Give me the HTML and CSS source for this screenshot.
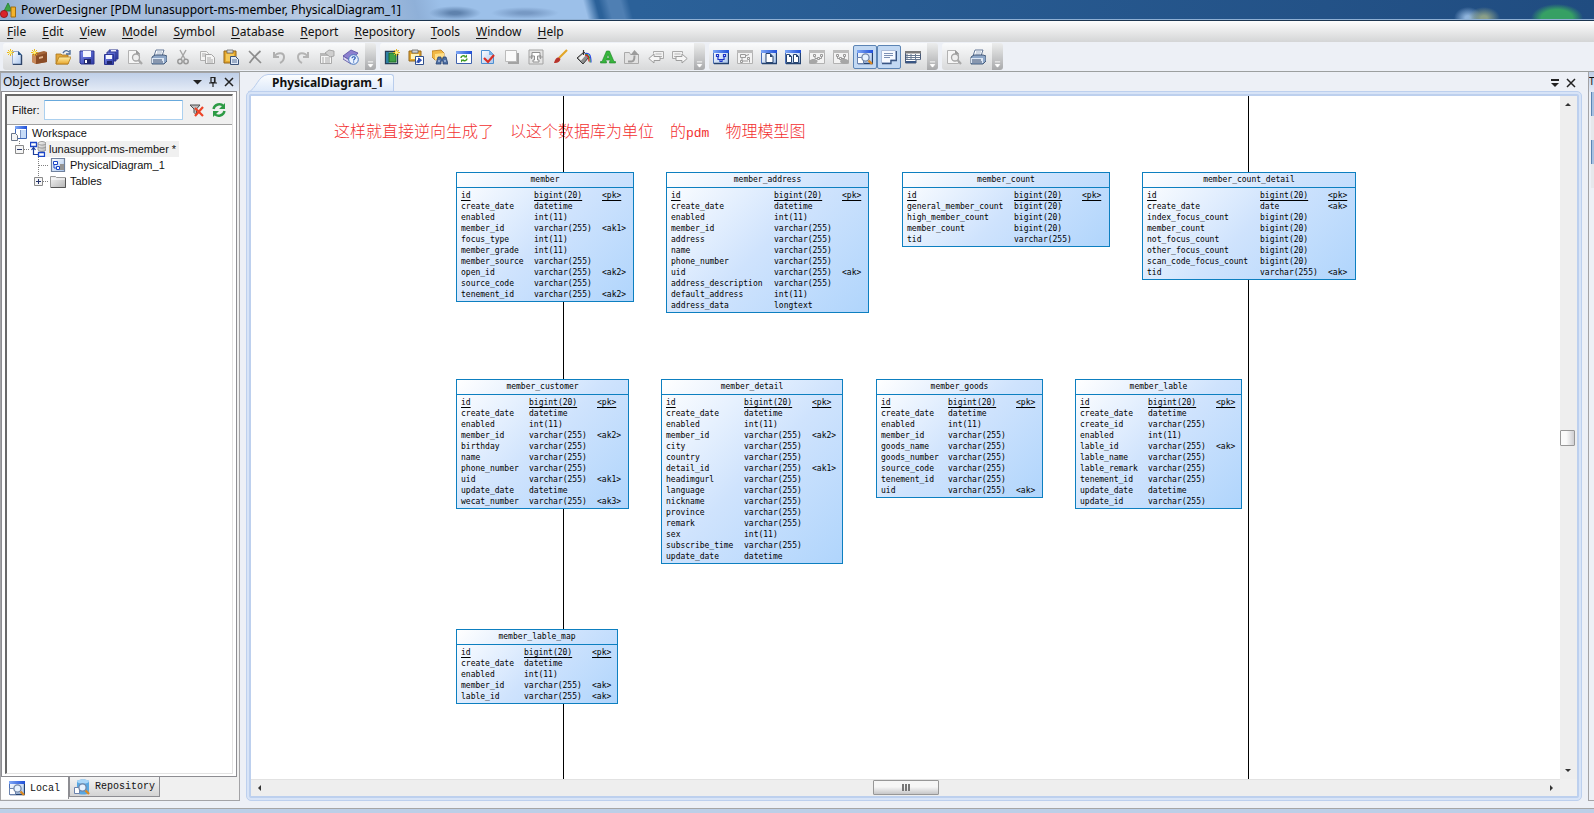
FILE: index.html
```html
<!DOCTYPE html>
<html lang="en">
<head>
<meta charset="utf-8">
<title>PowerDesigner [PDM lunasupport-ms-member, PhysicalDiagram_1]</title>
<link rel="stylesheet" href="styles.css">
</head>
<body>
<svg class="defs" width="0" height="0" aria-hidden="true">
  <defs>
    <linearGradient id="g-blue" x1="0" y1="0" x2="1" y2="1"><stop offset="0" stop-color="#ffffff"/><stop offset="1" stop-color="#a9c6ee"/></linearGradient>
    <linearGradient id="g-navy" x1="0" y1="0" x2="1" y2="1"><stop offset="0" stop-color="#7d8cf0"/><stop offset="1" stop-color="#2b37a0"/></linearGradient>
    <linearGradient id="g-gold" x1="0" y1="0" x2="0" y2="1"><stop offset="0" stop-color="#fff0a8"/><stop offset="1" stop-color="#e8a62c"/></linearGradient>
    <linearGradient id="g-gray" x1="0" y1="0" x2="1" y2="1"><stop offset="0" stop-color="#f6f6f6"/><stop offset="1" stop-color="#b4b4b4"/></linearGradient>
    <linearGradient id="g-win" x1="0" y1="0" x2="1" y2="0"><stop offset="0" stop-color="#7fa8f5"/><stop offset="1" stop-color="#1f4fd8"/></linearGradient>
    <linearGradient id="g-tab" x1="0" y1="0" x2="0" y2="1"><stop offset="0" stop-color="#fbfdff"/><stop offset="1" stop-color="#dce8f9"/></linearGradient>
    <symbol id="spark" viewBox="0 0 16 16"><path d="M3.500 0v7M0 3.500h7M1 1l5 5M6 1l-5 5" stroke="#e8b820" stroke-width="1"/><circle cx="3.500" cy="3.500" r="1.500" fill="#fff27a"/></symbol>
    <symbol id="page-new" viewBox="0 0 16 16"><path d="M5.500 2.500h6l3 3v10h-9z" fill="url(#g-blue)" stroke="#9aaccc"/><path d="M14.500 6v9.500H6" fill="none" stroke="#2d4468" stroke-width="1.400"/><path d="M11 2v4h4z" fill="#2d5a88"/><use href="#spark"/></symbol>
    <symbol id="case-new" viewBox="0 0 16 16"><path d="M1 5l12-3 3 1v10l-11 2-4-2z" fill="#a5663a"/><path d="M5 7l11-3v9L5 15z" fill="#8a4c26"/><path d="M1 5l4 2v8l-4-2z" fill="#c98b5c"/><path d="M8 8l4-1v2l-4 1z" fill="#e3b48c"/><use href="#spark"/></symbol>
    <symbol id="open" viewBox="0 0 16 16"><path d="M1 5h5l1 1h6v9H1z" fill="#e3a83c" stroke="#a87418" stroke-width=".8"/><path d="M1 15l3-7h12l-3 7z" fill="url(#g-gold)" stroke="#b17c1e" stroke-width=".8"/><path d="M8 4c2-3 4-3 6-1M15 1v4h-4" fill="none" stroke="#4d6d98" stroke-width="1.400"/></symbol>
    <symbol id="save" viewBox="0 0 16 16"><path d="M1 2h14v13H2l-1-1z" fill="url(#g-navy)" stroke="#2c3590"/><path d="M4 2h8v6H4z" fill="#f4f6ff"/><path d="M5 10h7v5H5z" fill="#20276c"/><path d="M6 11h2v3H6z" fill="#fff"/></symbol>
    <symbol id="save-all" viewBox="0 0 16 16"><path d="M6 1h9v9H6z" fill="url(#g-navy)" stroke="#2c3590"/><path d="M8 1h5v3H8z" fill="#eef"/><path d="M4 3h9v9H4z" fill="url(#g-navy)" stroke="#2c3590"/><path d="M1.500 5.500h9v10h-9z" fill="url(#g-navy)" stroke="#2c3590"/><path d="M3 6h6v4H3z" fill="#f4f6ff"/><path d="M4 12h5v3H4z" fill="#20276c"/></symbol>
    <symbol id="preview" viewBox="0 0 16 16"><path d="M1.500 1.500h8l3 3v10h-11z" fill="#f6f6f6" stroke="#b2b2b2"/><path d="M9 1v4h4z" fill="#999"/><circle cx="9" cy="8.500" r="3.500" fill="#eee" fill-opacity=".9" stroke="#a4a4a4" stroke-width="1.300"/><path d="M11.500 11l3.500 4" stroke="#a8a8a8" stroke-width="2.200"/></symbol>
    <symbol id="print" viewBox="0 0 16 16"><path d="M5 1h8l-2 6H3z" fill="#fff" stroke="#536a8c" stroke-width=".9"/><path d="M6 3h5M5.500 5h5" stroke="#8ba0bd" stroke-width=".8"/><path d="M1 8l3-2h9l3 1v5l-3 3H1z" fill="#8ea7c8" stroke="#3c5272" stroke-width=".9"/><path d="M1 9h12v5H1z" fill="#dde7f4"/><path d="M2 11h9M2 13h10" stroke="#35496a" stroke-width="1"/></symbol>
    <symbol id="cut" viewBox="0 0 16 16"><path d="M5 1l5 9M11 1l-5 9" stroke="#a5a5a5" stroke-width="1.400"/><circle cx="5" cy="12.500" r="2.200" fill="none" stroke="#999" stroke-width="1.500"/><circle cx="11" cy="12.500" r="2.200" fill="none" stroke="#999" stroke-width="1.500"/></symbol>
    <symbol id="copy" viewBox="0 0 16 16"><path d="M1.500 2.500h6l2 2v7h-8z" fill="#f4f4f4" stroke="#b0b0b0"/><path d="M6.500 5.500h6l3 3v6h-9z" fill="#f4f4f4" stroke="#a4a4a4"/><path d="M3 5h4M3 7h3M8 9h4M8 11h6M8 13h6" stroke="#ababab"/></symbol>
    <symbol id="paste" viewBox="0 0 16 16"><path d="M1 2h12v12H1z" fill="#e4a72d" stroke="#94661a"/><path d="M4 1h6v3H4z" fill="#d5d5d5" stroke="#6a6a6a" stroke-width=".8"/><path d="M3 5h8v7H3z" fill="#f4c95a"/><path d="M7.500 7.500h5l3 3v5h-8z" fill="#dfe9f8" stroke="#3b5278"/><path d="M9 11h5M9 13h5" stroke="#5b7398"/></symbol>
    <symbol id="delete" viewBox="0 0 16 16"><path d="M2 2l12 12M13.500 2C9 6 6 9 2.500 14" fill="none" stroke="#8d8d8d" stroke-width="1.700"/></symbol>
    <symbol id="undo" viewBox="0 0 16 16"><path d="M3 3v5h5M3 8c3-5 10-5 10 0 0 3-2 5-4 6" fill="none" stroke="#b0b0b0" stroke-width="2"/></symbol>
    <symbol id="redo" viewBox="0 0 16 16"><path d="M13 3v5H8M13 8C10 3 3 3 3 8c0 3 2 5 4 6" fill="none" stroke="#b4b4b4" stroke-width="2"/></symbol>
    <symbol id="props" viewBox="0 0 16 16"><path d="M1.500 4.500h11v10h-11z" fill="#f5f5f5" stroke="#aaa"/><path d="M1 4h12v3H1z" fill="#b8b8b8"/><path d="M3 9h2M6 9h5M3 11h2M6 11h5M3 13h2M6 13h5" stroke="#aaa"/><path d="M6 4l4-3 5 1v5l-4 1z" fill="#cfcfcf" stroke="#999" stroke-width=".8"/></symbol>
    <symbol id="help" viewBox="0 0 16 16"><path d="M0 7l8-6 7 3-7 8z" fill="#8c80cf" stroke="#564da0" stroke-width=".8"/><path d="M0 7l8 5v3L0 10z" fill="#dcd8f2" stroke="#564da0" stroke-width=".8"/><circle cx="10.500" cy="10.500" r="4.800" fill="#e9f2ff" stroke="#4775bd"/><path d="M9 9.300c0-2 3.400-2 3.200-.2 0 1-1.600 1.100-1.600 2.300M10.600 12.500v1" fill="none" stroke="#2056b0" stroke-width="1.200"/></symbol>
    <symbol id="book-new" viewBox="0 0 16 16"><path d="M1.500 2.500h12v12h-12z" fill="#fff" stroke="#273d55" stroke-width="1.300"/><path d="M2 3h3v11H2z" fill="#2e7fa0"/><path d="M5 4h7v9H5z" fill="#3fa145" stroke="#1d6c2b"/><g transform="translate(9 0)"><path d="M3.500 0v7M0 3.500h7M1 1l5 5M6 1l-5 5" stroke="#e8b820"/><circle cx="3.500" cy="3.500" r="1.500" fill="#fff27a"/></g></symbol>
    <symbol id="paste-link" viewBox="0 0 16 16"><path d="M1 2h12v10H1z" fill="#e4a72d" stroke="#94661a"/><path d="M4 1h6v3H4z" fill="#cfcfcf" stroke="#666" stroke-width=".8"/><path d="M3 5h8v5H3z" fill="#fff2b8"/><path d="M7.500 7.500h8v8h-8z" fill="#fff" stroke="#30508c"/><path d="M9 14c0-3 1-3 3-3M10.500 9l3 2-3 3z" fill="#2b4eb5" stroke="#2b4eb5"/></symbol>
    <symbol id="find" viewBox="0 0 16 16"><path d="M0 2l9-1 3 3v5l-9 2-3-3z" fill="#f1b845" stroke="#b7791c" stroke-width=".8"/><path d="M3 5l9-1v5l-9 2z" fill="#ffdf88"/><path d="M6 8h3v2h2V8h3l2 7h-5v-3h-2v3H4z" fill="#4e6fa3" stroke="#2a4574" stroke-width=".8"/><path d="M6 12h2M12 12h2" stroke="#d6e6fb"/></symbol>
    <symbol id="win-refresh" viewBox="0 0 16 16"><path d="M.5 2.500h15v12H.5z" fill="#fff" stroke="#3f62ad"/><path d="M0 2h16v3H0z" fill="url(#g-win)"/><path d="M5 9c0-2 3-3 4-1.500M11 9.500c0 2-3 3-4 1.500" fill="none" stroke="#3e9a22" stroke-width="1.400"/><path d="M8 8.500h3V5.500zM8 10.500H5v3z" fill="#3e9a22"/></symbol>
    <symbol id="check" viewBox="0 0 16 16"><path d="M1.500 1.500h8l4 4v9h-12z" fill="url(#g-blue)" stroke="#4d8fd0"/><path d="M9 1v5h5z" fill="#76b1e5"/><path d="M4 9l4 4 6-7" fill="none" stroke="#d93025" stroke-width="2.200"/></symbol>
    <symbol id="shadow" viewBox="0 0 16 16"><path d="M4 4h11v11H4z" fill="#a3a3a3"/><path d="M1.500 1.500h11v11h-11z" fill="#fafafa" stroke="#bbb"/></symbol>
    <symbol id="text-frame" viewBox="0 0 16 16"><path d="M1 1h14v14H1z" fill="#e4e4e4" stroke="#a3a3a3"/><path d="M4 3.500h8v3.500H9.500v4H11v2H5v-2h1.500V7H4z" fill="#fff" stroke="#8f8f8f"/><path d="M1 8h4M11 8h4M3.500 6v4M12.500 6v4" stroke="#999" stroke-width="1.200"/></symbol>
    <symbol id="brush" viewBox="0 0 16 16"><path d="M15 1L7 9" stroke="#e2a526" stroke-width="2.200"/><path d="M7 8.500c-3 0-4 2-5 5.500 3 .5 6-1 6.500-4z" fill="#b8332b"/></symbol>
    <symbol id="bucket" viewBox="0 0 16 16"><path d="M1 9l7-6 5 5-6 7z" fill="#8d8d8d" stroke="#3b3b3b"/><path d="M2.500 9L8 4l2 2-5 5.500z" fill="#f1f1f1"/><path d="M7.500 6V1" stroke="#333" stroke-width="1.200"/><path d="M9 4.500c4-1 6 1 6 9" fill="none" stroke="#2848e8" stroke-width="1.200"/><path d="M9 5.500c3-1 5 1 5 8" fill="none" stroke="#28a628" stroke-width="1"/><path d="M9 6.500c2-1 4 1 4 6" fill="none" stroke="#e02020" stroke-width="1.200"/></symbol>
    <symbol id="font" viewBox="0 0 16 16"><path fill-rule="evenodd" d="M6.500 2h3L14 12.500h1.500V14H9.500v-1.500h1L10 11H6l-.5 1.500h1V14H.5v-1.500H2zM8 5.500L6.600 9h2.800z" fill="#37b63c" stroke="#1d8427" stroke-width=".6"/></symbol>
    <symbol id="folder-up" viewBox="0 0 16 16"><path d="M.5 3.500h5l1 2h8v9H.5z" fill="#e2e2e2" stroke="#aaa"/><path d="M4 12.500h3.500c2 0 3-1 3-6" fill="none" stroke="#9c9c9c" stroke-width="2"/><path d="M6.500 6l4-5 4.500 5z" fill="#9c9c9c"/></symbol>
    <symbol id="back" viewBox="0 0 16 16"><path d="M5.500 4.500V2.500h10v7h-4" fill="#f2f2f2" stroke="#a9a9a9"/><path d="M7.500 5h6M12 7.500h2" stroke="#b5b5b5"/><path d="M.8 9.500L6 5v2.500h6v4H6V14z" fill="#f6f6f6" stroke="#9d9d9d"/></symbol>
    <symbol id="forward" viewBox="0 0 16 16"><path d="M10.500 4.500V2.500H.5v7h4" fill="#f2f2f2" stroke="#a9a9a9"/><path d="M2.500 5h6M2 7.500h2" stroke="#b5b5b5"/><path d="M15.200 9.500L10 5v2.500H4v4h6V14z" fill="#f6f6f6" stroke="#9d9d9d"/></symbol>
    <symbol id="win" viewBox="0 0 16 16"><path d="M.5 1.500h15v13H.5z" fill="url(#g-blue)" stroke="#4a6fb8"/><path d="M0 1h16v3H0z" fill="url(#g-win)"/><path d="M15.500 4v10.500H1" fill="none" stroke="#24426f" stroke-width="1.300"/></symbol>
    <symbol id="win-gray" viewBox="0 0 16 16"><path d="M.5 1.500h15v13H.5z" fill="#f3f3f3" stroke="#b2b2b2"/><path d="M0 1h16v3H0z" fill="#bcbcbc"/></symbol>
    <symbol id="win-model" viewBox="0 0 16 16"><use href="#win"/><path d="M3.500 5.500h2v2h-2zM10.500 5.500h2v2h-2zM7 10.500h2v2H7zM5 8v2.500h2M11 8v2.500H9.500" fill="#fff" stroke="#1c35c8" stroke-width="1.200"/></symbol>
    <symbol id="win-parts" viewBox="0 0 16 16"><use href="#win-gray"/><path d="M3.500 5.500h5v3h-5zM3.500 11.500h2v2h-2zM10.500 8.500h2v2h-2zM8 7l4-1.500M12.500 11v2.500M5 12h6M5 9v2" fill="none" stroke="#999"/></symbol>
    <symbol id="win-page" viewBox="0 0 16 16"><use href="#win"/><path d="M5 4.500h4l3 3v6H5z" fill="#fff" stroke="#28456e"/><path d="M9 4v4h3z" fill="#28456e"/></symbol>
    <symbol id="win-pages" viewBox="0 0 16 16"><use href="#win"/><path d="M1.500 5.500h3l2 2v6h-5zM8.500 5.500h3l2 2v6h-5z" fill="#fff" stroke="#28456e"/><path d="M4 5v3h3zM11 5v3h3z" fill="#28456e"/></symbol>
    <symbol id="win-left" viewBox="0 0 16 16"><use href="#win-gray"/><path d="M4.500 5.500h2v2h-2zM11.500 5.500h2v2h-2zM8.500 8.500h2v2h-2zM6 8v1.500h2M12.500 8v1.500H11" fill="none" stroke="#999"/><path d="M0 12c3-3 6-2 8-1 2 2-1 4-4 4s-5-1-4-3z" fill="#a6a6a6"/></symbol>
    <symbol id="win-right" viewBox="0 0 16 16"><use href="#win-gray"/><path d="M3.500 5.500h2v2h-2zM10.500 5.500h2v2h-2zM6.500 8.500h2v2h-2zM4.500 8v1.500h2M11.500 8v1.500H9" fill="none" stroke="#999"/><path d="M7 12c2-3 6-3 9 0 0 2-1 3-4 3s-5-1-5-3z" fill="#a6a6a6"/></symbol>
    <symbol id="win-find" viewBox="0 0 16 16"><use href="#win"/><path d="M.5 8.500h6v6h-6z" fill="#fff" stroke="#6b83ad"/><circle cx="8.500" cy="8.500" r="3.600" fill="#e6f2ff" stroke="#7286a6" stroke-width="1.300"/><path d="M11.500 11.500l3.500 3.500" stroke="#dc8b22" stroke-width="2.400"/></symbol>
    <symbol id="output" viewBox="0 0 16 16"><path d="M.5 1.500h14v9.500H9.500v3h-9z" fill="#f7faff" stroke="#aabbd8"/><path d="M15.500 2v9.500H10v3H1" fill="none" stroke="#3a5683" stroke-width="1.300"/><path d="M3 4.500h9M3 6.500h9M3 8.500h6" stroke="#7c90b4"/></symbol>
    <symbol id="grid" viewBox="0 0 16 16"><path d="M.5 2.500h15v8H11v3.500H.5z" fill="#fff" stroke="#495a78"/><path d="M0 2h16v2.500H0z" fill="#7a7a7a"/><path d="M2 5v6M6 5v6M10.500 5v6M1 6.500h14M1 8.500h14M1 10.500h14" stroke="#66788f"/><path d="M1 13h10" stroke="#3a5683" stroke-width="2"/></symbol>
    <symbol id="repo" viewBox="0 0 16 16"><path d="M3 2c2-2 10-2 12 0v12c-2 2-10 2-12 0z" fill="#58a7e2"/><ellipse cx="9" cy="2.500" rx="6" ry="2" fill="#a9d6f8"/><path d="M.5 8.500h5v6h-5z" fill="#fff" stroke="#6b83ad"/><circle cx="8.500" cy="8.500" r="3.600" fill="#e6f2ff" stroke="#7286a6" stroke-width="1.300"/><path d="M11.500 11.500l3.500 3.500" stroke="#dc8b22" stroke-width="2.400"/></symbol>
  </defs>
</svg>

<header class="titlebar">
  <svg class="app-icon" width="16" height="16" viewBox="0 0 16 16"><path d="M8 1l4 8H4z" fill="#3da447" stroke="#1f7a2d" stroke-width=".8"/><circle cx="4" cy="12" r="3.600" fill="#d9252b" stroke="#8d1418" stroke-width=".8"/><path d="M11 5h4.500v10H11z" fill="#f3b32b" stroke="#a06c10"/></svg>
  <h1>PowerDesigner [PDM lunasupport-ms-member, PhysicalDiagram_1]</h1>
</header>

<nav class="menubar" aria-label="Menu">
  <button><u>F</u>ile</button><button><u>E</u>dit</button><button><u>V</u>iew</button><button><u>M</u>odel</button><button><u>S</u>ymbol</button><button><u>D</u>atabase</button><button><u>R</u>eport</button><button><u>R</u>epository</button><button><u>T</u>ools</button><button><u>W</u>indow</button><button><u>H</u>elp</button>
</nav>

<div class="toolbars">
  <div class="toolbar" role="toolbar" aria-label="Standard">
    <div class="tools">
      <button aria-label="New model"><svg><use href="#page-new"/></svg></button>
      <button aria-label="New project"><svg><use href="#case-new"/></svg></button>
      <button aria-label="Open"><svg><use href="#open"/></svg></button>
      <button aria-label="Save"><svg><use href="#save"/></svg></button>
      <button aria-label="Save all"><svg><use href="#save-all"/></svg></button>
      <button aria-label="Print preview"><svg><use href="#preview"/></svg></button>
      <button aria-label="Print"><svg><use href="#print"/></svg></button>
      <button aria-label="Cut"><svg><use href="#cut"/></svg></button>
      <button aria-label="Copy"><svg><use href="#copy"/></svg></button>
      <button aria-label="Paste"><svg><use href="#paste"/></svg></button>
      <button aria-label="Delete"><svg><use href="#delete"/></svg></button>
      <button aria-label="Undo"><svg><use href="#undo"/></svg></button>
      <button aria-label="Redo"><svg><use href="#redo"/></svg></button>
      <button aria-label="Properties"><svg><use href="#props"/></svg></button>
      <button aria-label="Help"><svg><use href="#help"/></svg></button>
    </div>
    <button class="more" aria-label="Toolbar options"><svg viewBox="0 0 8 8"><path d="M1 1h6M1.500 4h5L4 7z" fill="#fff" stroke="#fff"/></svg></button>
  </div>
  <div class="toolbar" role="toolbar" aria-label="Diagram">
    <div class="tools">
      <button aria-label="New diagram"><svg><use href="#book-new"/></svg></button>
      <button aria-label="Paste as shortcut"><svg><use href="#paste-link"/></svg></button>
      <button aria-label="Find objects"><svg><use href="#find"/></svg></button>
      <button aria-label="Refresh"><svg><use href="#win-refresh"/></svg></button>
      <button aria-label="Check model"><svg><use href="#check"/></svg></button>
      <button aria-label="Shadow"><svg><use href="#shadow"/></svg></button>
      <button aria-label="Text frame"><svg><use href="#text-frame"/></svg></button>
      <button aria-label="Line style"><svg><use href="#brush"/></svg></button>
      <button aria-label="Fill"><svg><use href="#bucket"/></svg></button>
      <button aria-label="Font"><svg><use href="#font"/></svg></button>
      <button aria-label="Up one level"><svg><use href="#folder-up"/></svg></button>
      <button aria-label="Previous view"><svg><use href="#back"/></svg></button>
      <button aria-label="Next view"><svg><use href="#forward"/></svg></button>
    </div>
    <button class="more" aria-label="Toolbar options"><svg viewBox="0 0 8 8"><path d="M1 1h6M1.500 4h5L4 7z" fill="#fff" stroke="#fff"/></svg></button>
  </div>
  <div class="toolbar" role="toolbar" aria-label="View">
    <div class="tools">
      <button aria-label="Model view"><svg><use href="#win-model"/></svg></button>
      <button aria-label="Parts view"><svg><use href="#win-parts"/></svg></button>
      <button aria-label="Page view"><svg><use href="#win-page"/></svg></button>
      <button aria-label="Pages view"><svg><use href="#win-pages"/></svg></button>
      <button aria-label="Previous diagram"><svg><use href="#win-left"/></svg></button>
      <button aria-label="Next diagram"><svg><use href="#win-right"/></svg></button>
      <button class="on" aria-pressed="true" aria-label="Object browser"><svg><use href="#win-find"/></svg></button>
      <button class="on" aria-pressed="true" aria-label="Output"><svg><use href="#output"/></svg></button>
      <button aria-label="Result list"><svg><use href="#grid"/></svg></button>
    </div>
    <button class="more" aria-label="Toolbar options"><svg viewBox="0 0 8 8"><path d="M1 1h6M1.500 4h5L4 7z" fill="#fff" stroke="#fff"/></svg></button>
  </div>
  <div class="toolbar" role="toolbar" aria-label="Print">
    <div class="tools">
      <button aria-label="Preview"><svg><use href="#preview"/></svg></button>
      <button aria-label="Print diagram"><svg><use href="#print"/></svg></button>
    </div>
    <button class="more" aria-label="Toolbar options"><svg viewBox="0 0 8 8"><path d="M1 1h6M1.500 4h5L4 7z" fill="#fff" stroke="#fff"/></svg></button>
  </div>
</div>

<main class="workspace">
  <aside class="browser">
    <header class="panel-head">
      <h2>Object Browser</h2>
      <button aria-label="Menu"><svg viewBox="0 0 12 12"><path d="M2 4h9L6.500 8.500z" fill="#222"/></svg></button>
      <button aria-label="Pin"><svg viewBox="0 0 12 12"><path d="M4 1.500h4v5H4zM7.500 1.500v5M2 7h8M6 7v4" fill="none" stroke="#222" stroke-width="1.200"/></svg></button>
      <button aria-label="Close"><svg viewBox="0 0 12 12"><path d="M2 2l8 8M10 2l-8 8" stroke="#222" stroke-width="1.500"/></svg></button>
    </header>
    <div class="panel-body">
      <div class="panel-inset">
        <div class="filter">
          <label for="filter">Filter:</label>
          <input id="filter" type="text">
          <button aria-label="Clear filter"><svg viewBox="0 0 16 16"><path d="M1 3h10L7.500 7v6L5 10.500V7z" fill="#bdbdbd" stroke="#4e4e4e"/><path d="M6 6l8 8M14 5l-8 9" stroke="#ec4326" stroke-width="2.200"/></svg></button>
          <button aria-label="Refresh tree"><svg viewBox="0 0 16 16"><path d="M2.500 7c1-5 7-6 10-3M13.500 9c-1 5-7 6-10 3" fill="none" stroke="#2d9b45" stroke-width="2.400"/><path d="M14 1v6H8zM2 15V9h6z" fill="#2d9b45"/></svg></button>
        </div>
        <ul class="tree" role="tree">
          <li class="node root" role="treeitem"><svg class="ico" viewBox="0 0 16 16"><path d="M4.500 1.500h11v12h-11z" fill="#fff" stroke="#3f68b8"/><path d="M4 1h12v3H4z" fill="url(#g-win)"/><path d="M9.500 5v8" stroke="#7f97c5"/><path d="M10 5h5v8h-5z" fill="#c7dcf8"/><path d="M.5 8.500h4l2 2v5h-6z" fill="#f5f5f5" stroke="#6c7788"/></svg><span>Workspace</span></li>
          <li class="node model" role="treeitem"><svg class="twig" viewBox="0 0 15 16"><path d="M4.500 0v4M9 8.500h6" stroke="#808080" stroke-dasharray="1 1"/><path d="M.5 4.500h8v8h-8z" fill="#f5f5f5" stroke="#8a8a8a"/><path d="M2 8.500h5" stroke="#26356b"/></svg><svg class="ico" viewBox="0 0 16 16"><path d="M8 2c2-2 6-2 8 0v7c-2 2-6 2-8 0z" fill="url(#g-gray)" stroke="#888" stroke-width=".8"/><path d="M8 3c2 1.500 6 1.500 8 0M8 6c2 1.500 6 1.500 8 0" fill="none" stroke="#888" stroke-width=".8"/><path d="M.5 1.500h6v4h-6zM8.500 11.500h6v4h-6z" fill="#fff" stroke="#1b46c8" stroke-width="1.300"/><path d="M3.500 6v7.500H8M1.500 9l2-2.500L5.500 9" fill="none" stroke="#1d3f9c" stroke-width="1.200"/></svg><span class="selected">lunasupport-ms-member *</span></li>
          <li class="node leaf" role="treeitem"><svg class="twig" viewBox="0 0 15 16"><path d="M4.500 0v16M5 8.500h10" stroke="#808080" stroke-dasharray="1 1"/></svg><svg class="ico" viewBox="0 0 16 16"><path d="M1.500 1.500h13v13h-13z" fill="url(#g-blue)" stroke="#6f819d" stroke-width="1.200"/><path d="M3.500 4.500h4v3h-4zM6.500 9.500h3v3h-3zM4 8v3h2" fill="#fff" stroke="#1b46c8"/><path d="M10 7h4v6h-4z" fill="#949494"/></svg><span>PhysicalDiagram_1</span></li>
          <li class="node leaf" role="treeitem"><svg class="twig" viewBox="0 0 15 16"><path d="M4.500 0v4M9 8.500h6" stroke="#808080" stroke-dasharray="1 1"/><path d="M.5 4.500h8v8h-8z" fill="#f5f5f5" stroke="#8a8a8a"/><path d="M2 8.500h5M4.500 6v5" stroke="#26356b"/></svg><svg class="ico" viewBox="0 0 16 16"><path d="M.5 3.500h5l1 1h9v10H.5z" fill="url(#g-gray)" stroke="#9a9a9a"/><path d="M1 6h14" stroke="#fff"/><path d="M15.500 5v9.500H1" fill="none" stroke="#555"/></svg><span>Tables</span></li>
        </ul>
      </div>
    </div>
    <div class="browser-tabs" role="tablist">
      <button role="tab" aria-selected="true" class="active"><svg><use href="#win-find"/></svg>Local</button>
      <button role="tab" aria-selected="false"><svg><use href="#repo"/></svg>Repository</button>
    </div>
  </aside>

  <section class="document">
    <div class="doc-strip">
      <button class="doc-tab"><svg class="slope" viewBox="0 0 22 18"><path d="M0 18C8 16 10 1 20 .5h2V18z" fill="url(#g-tab)"/><path d="M0 18C8 16 10 1 20 .5h2" fill="none" stroke="#b9cdec"/></svg><span>PhysicalDiagram_1</span></button>
      <div class="doc-actions">
        <button aria-label="Window list"><svg viewBox="0 0 12 12"><path d="M2 3h8" stroke="#222" stroke-width="2"/><path d="M2 6h8L6 10z" fill="#222"/></svg></button>
        <button aria-label="Close diagram"><svg viewBox="0 0 12 12"><path d="M2 2l8 8M10 2l-8 8" stroke="#222" stroke-width="1.500"/></svg></button>
      </div>
    </div>
    <div class="frame">
      <div class="frame-inner">
        <div class="canvas">
          <p class="note">这样就直接逆向生成了　以这个数据库为单位　的<span>pdm</span>　物理模型图</p>
          <div class="page-line line-a"></div>
          <div class="page-line line-b"></div>

          <article class="entity row-1 c1"><h3>member</h3><table>
            <tr><td><u>id</u></td><td><u>bigint(20)</u></td><td><u>&lt;pk&gt;</u></td></tr>
            <tr><td>create_date</td><td>datetime</td><td></td></tr>
            <tr><td>enabled</td><td>int(11)</td><td></td></tr>
            <tr><td>member_id</td><td>varchar(255)</td><td>&lt;ak1&gt;</td></tr>
            <tr><td>focus_type</td><td>int(11)</td><td></td></tr>
            <tr><td>member_grade</td><td>int(11)</td><td></td></tr>
            <tr><td>member_source</td><td>varchar(255)</td><td></td></tr>
            <tr><td>open_id</td><td>varchar(255)</td><td>&lt;ak2&gt;</td></tr>
            <tr><td>source_code</td><td>varchar(255)</td><td></td></tr>
            <tr><td>tenement_id</td><td>varchar(255)</td><td>&lt;ak2&gt;</td></tr>
          </table></article>

          <article class="entity row-1 c2"><h3>member_address</h3><table>
            <tr><td><u>id</u></td><td><u>bigint(20)</u></td><td><u>&lt;pk&gt;</u></td></tr>
            <tr><td>create_date</td><td>datetime</td><td></td></tr>
            <tr><td>enabled</td><td>int(11)</td><td></td></tr>
            <tr><td>member_id</td><td>varchar(255)</td><td></td></tr>
            <tr><td>address</td><td>varchar(255)</td><td></td></tr>
            <tr><td>name</td><td>varchar(255)</td><td></td></tr>
            <tr><td>phone_number</td><td>varchar(255)</td><td></td></tr>
            <tr><td>uid</td><td>varchar(255)</td><td>&lt;ak&gt;</td></tr>
            <tr><td>address_description</td><td>varchar(255)</td><td></td></tr>
            <tr><td>default_address</td><td>int(11)</td><td></td></tr>
            <tr><td>address_data</td><td>longtext</td><td></td></tr>
          </table></article>

          <article class="entity row-1 c3"><h3>member_count</h3><table>
            <tr><td><u>id</u></td><td><u>bigint(20)</u></td><td><u>&lt;pk&gt;</u></td></tr>
            <tr><td>general_member_count</td><td>bigint(20)</td><td></td></tr>
            <tr><td>high_member_count</td><td>bigint(20)</td><td></td></tr>
            <tr><td>member_count</td><td>bigint(20)</td><td></td></tr>
            <tr><td>tid</td><td>varchar(255)</td><td></td></tr>
          </table></article>

          <article class="entity row-1 c4"><h3>member_count_detail</h3><table>
            <tr><td><u>id</u></td><td><u>bigint(20)</u></td><td><u>&lt;pk&gt;</u></td></tr>
            <tr><td>create_date</td><td>date</td><td>&lt;ak&gt;</td></tr>
            <tr><td>index_focus_count</td><td>bigint(20)</td><td></td></tr>
            <tr><td>member_count</td><td>bigint(20)</td><td></td></tr>
            <tr><td>not_focus_count</td><td>bigint(20)</td><td></td></tr>
            <tr><td>other_focus_count</td><td>bigint(20)</td><td></td></tr>
            <tr><td>scan_code_focus_count</td><td>bigint(20)</td><td></td></tr>
            <tr><td>tid</td><td>varchar(255)</td><td>&lt;ak&gt;</td></tr>
          </table></article>

          <article class="entity row-2 c5"><h3>member_customer</h3><table>
            <tr><td><u>id</u></td><td><u>bigint(20)</u></td><td><u>&lt;pk&gt;</u></td></tr>
            <tr><td>create_date</td><td>datetime</td><td></td></tr>
            <tr><td>enabled</td><td>int(11)</td><td></td></tr>
            <tr><td>member_id</td><td>varchar(255)</td><td>&lt;ak2&gt;</td></tr>
            <tr><td>birthday</td><td>varchar(255)</td><td></td></tr>
            <tr><td>name</td><td>varchar(255)</td><td></td></tr>
            <tr><td>phone_number</td><td>varchar(255)</td><td></td></tr>
            <tr><td>uid</td><td>varchar(255)</td><td>&lt;ak1&gt;</td></tr>
            <tr><td>update_date</td><td>datetime</td><td></td></tr>
            <tr><td>wecat_number</td><td>varchar(255)</td><td>&lt;ak3&gt;</td></tr>
          </table></article>

          <article class="entity row-2 c6"><h3>member_detail</h3><table>
            <tr><td><u>id</u></td><td><u>bigint(20)</u></td><td><u>&lt;pk&gt;</u></td></tr>
            <tr><td>create_date</td><td>datetime</td><td></td></tr>
            <tr><td>enabled</td><td>int(11)</td><td></td></tr>
            <tr><td>member_id</td><td>varchar(255)</td><td>&lt;ak2&gt;</td></tr>
            <tr><td>city</td><td>varchar(255)</td><td></td></tr>
            <tr><td>country</td><td>varchar(255)</td><td></td></tr>
            <tr><td>detail_id</td><td>varchar(255)</td><td>&lt;ak1&gt;</td></tr>
            <tr><td>headimgurl</td><td>varchar(255)</td><td></td></tr>
            <tr><td>language</td><td>varchar(255)</td><td></td></tr>
            <tr><td>nickname</td><td>varchar(255)</td><td></td></tr>
            <tr><td>province</td><td>varchar(255)</td><td></td></tr>
            <tr><td>remark</td><td>varchar(255)</td><td></td></tr>
            <tr><td>sex</td><td>int(11)</td><td></td></tr>
            <tr><td>subscribe_time</td><td>varchar(255)</td><td></td></tr>
            <tr><td>update_date</td><td>datetime</td><td></td></tr>
          </table></article>

          <article class="entity row-2 c7"><h3>member_goods</h3><table>
            <tr><td><u>id</u></td><td><u>bigint(20)</u></td><td><u>&lt;pk&gt;</u></td></tr>
            <tr><td>create_date</td><td>datetime</td><td></td></tr>
            <tr><td>enabled</td><td>int(11)</td><td></td></tr>
            <tr><td>member_id</td><td>varchar(255)</td><td></td></tr>
            <tr><td>goods_name</td><td>varchar(255)</td><td></td></tr>
            <tr><td>goods_number</td><td>varchar(255)</td><td></td></tr>
            <tr><td>source_code</td><td>varchar(255)</td><td></td></tr>
            <tr><td>tenement_id</td><td>varchar(255)</td><td></td></tr>
            <tr><td>uid</td><td>varchar(255)</td><td>&lt;ak&gt;</td></tr>
          </table></article>

          <article class="entity row-2 c8"><h3>member_lable</h3><table>
            <tr><td><u>id</u></td><td><u>bigint(20)</u></td><td><u>&lt;pk&gt;</u></td></tr>
            <tr><td>create_date</td><td>datetime</td><td></td></tr>
            <tr><td>create_id</td><td>varchar(255)</td><td></td></tr>
            <tr><td>enabled</td><td>int(11)</td><td></td></tr>
            <tr><td>lable_id</td><td>varchar(255)</td><td>&lt;ak&gt;</td></tr>
            <tr><td>lable_name</td><td>varchar(255)</td><td></td></tr>
            <tr><td>lable_remark</td><td>varchar(255)</td><td></td></tr>
            <tr><td>tenement_id</td><td>varchar(255)</td><td></td></tr>
            <tr><td>update_date</td><td>datetime</td><td></td></tr>
            <tr><td>update_id</td><td>varchar(255)</td><td></td></tr>
          </table></article>

          <article class="entity row-3 c9"><h3>member_lable_map</h3><table>
            <tr><td><u>id</u></td><td><u>bigint(20)</u></td><td><u>&lt;pk&gt;</u></td></tr>
            <tr><td>create_date</td><td>datetime</td><td></td></tr>
            <tr><td>enabled</td><td>int(11)</td><td></td></tr>
            <tr><td>member_id</td><td>varchar(255)</td><td>&lt;ak&gt;</td></tr>
            <tr><td>lable_id</td><td>varchar(255)</td><td>&lt;ak&gt;</td></tr>
          </table></article>
        </div>
        <div class="scroll vertical">
          <button aria-label="Scroll up"><svg viewBox="0 0 8 8"><path d="M1 6l3-3 3 3z" fill="#333"/></svg></button>
          <div class="thumb"></div>
          <button aria-label="Scroll down"><svg viewBox="0 0 8 8"><path d="M1 2l3 3 3-3z" fill="#333"/></svg></button>
        </div>
        <div class="scroll horizontal">
          <button aria-label="Scroll left"><svg viewBox="0 0 8 8"><path d="M6 1L3 4l3 3z" fill="#333"/></svg></button>
          <div class="thumb"><i></i><i></i><i></i></div>
          <button aria-label="Scroll right"><svg viewBox="0 0 8 8"><path d="M2 1l3 3-3 3z" fill="#333"/></svg></button>
        </div>
        <div class="corner"></div>
      </div>
    </div>
  </section>

  <aside class="toolbox">
    <h2>T</h2>
    <div class="slot pressed"></div>
    <div class="slot"></div>
    <div class="slot pressed"></div>
    <div class="slot"></div>
  </aside>
</main>
<footer class="dock"></footer>
</body>
</html>
```

FILE: styles.css
```css
* { box-sizing: border-box; }

body {
  margin: 0;
  height: 100vh;
  display: flex;
  flex-direction: column;
  overflow: hidden;
  background: #edf0f6;
  color: #111;
  font-family: "Noto Sans", "Open Sans", sans-serif;
  font-size: 12px;
}

h1, h2, h3, p, ul { margin: 0; padding: 0; font-weight: normal; }

button {
  margin: 0;
  padding: 0;
  border: 0;
  background: none;
  color: inherit;
  font: inherit;
}

svg { display: block; flex: none; width: 16px; height: 16px; }
.defs { position: absolute; width: 0; height: 0; }

/* Title and menu */
.titlebar {
  flex: none;
  display: flex;
  align-items: center;
  gap: 5px;
  height: 21px;
  border-bottom: 1px solid #1c3550;
  box-shadow: inset 0 -1px #8fb0d4;
  background:
    radial-gradient(ellipse 26px 14px at 1557px 18px, #36a064 60%, transparent),
    radial-gradient(ellipse 16px 11px at 1484px 18px, #8a9f88 20%, transparent),
    radial-gradient(ellipse 14px 11px at 1468px 18px, #8fb4dc 20%, transparent),
    radial-gradient(ellipse 26px 7px at 455px 13px, #5f82ad 20%, transparent),
    radial-gradient(ellipse 34px 6px at 525px 13px, #7799c4 20%, transparent),
    linear-gradient(75deg, transparent 583px, #4f7fb3 592px, #4f7fb3 604px, transparent 612px),
    linear-gradient(75deg, #8eabd0 0, #b9cbe2 60px, #9db6d8 190px, #bccde4 310px, #8fb0d8 405px, #9cc0e9 430px, #9cc0e9 568px, transparent 580px),
    linear-gradient(90deg, #2b6199 40%, #204c80);
}
.titlebar h1 { font-size: 12px; line-height: 20px; color: #000; white-space: nowrap; }

.menubar {
  flex: none;
  display: flex;
  gap: 16px;
  height: 21px;
  padding-left: 7px;
  background: linear-gradient(#fdfdfd, #d4d5d6);
}
.menubar button { line-height: 20px; }
u { text-underline-offset: 2px; }

/* Toolbars */
.toolbars {
  flex: none;
  display: flex;
  gap: 4px;
  padding: 1px 3px 1px;
  height: 30px;
  border-bottom: 1px solid #9c9f9f;
}
.toolbar { display: flex; height: 27px; }
.tools {
  display: flex;
  align-items: center;
  padding-right: 2px;
  border-radius: 3px 0 0 3px;
  background: linear-gradient(#fafbfc, #d8d9da);
}
.tools button { display: grid; place-items: center; width: 24px; height: 24px; }
.tools .on { border: 1px solid #5c84b4; border-radius: 2px; background: #c3d9f3; }
.more {
  display: flex;
  align-items: flex-end;
  justify-content: center;
  width: 11px;
  padding-bottom: 2px;
  border-radius: 0 3px 3px 0;
  background: linear-gradient(#eceded, #a8a9ab);
}
.more svg { width: 7px; height: 7px; }

/* Main split */
.workspace { flex: 1; min-height: 0; display: flex; padding-bottom: 7px; }

.browser {
  flex: none;
  display: flex;
  flex-direction: column;
  width: 240px;
  border: 1px solid #a3a3a6;
  background: #f0f0f0;
}
.panel-head {
  display: flex;
  align-items: center;
  gap: 4px;
  height: 18px;
  padding: 0 4px 0 2px;
  background: linear-gradient(#bfcfe8, #e4ebf6);
}
.panel-head h2 { flex: 1; font-size: 12px; line-height: 16px; }
.panel-head svg { width: 12px; height: 12px; }
.panel-body {
  flex: 1;
  display: flex;
  padding: 2px 3px;
  margin-right: 2px;
  border: 1px solid #8d8d92;
  background: #fff;
}
.panel-inset {
  flex: 1;
  border: 1px solid #e3e3e3;
  border-top: 2px solid #696969;
  border-left: 2px solid #696969;
}
.filter {
  display: flex;
  align-items: center;
  gap: 6px;
  height: 29px;
  padding-left: 5px;
  border-bottom: 1px solid #a0a0a0;
  background: #f0f0f0;
  font-family: "Liberation Sans", sans-serif;
  font-size: 11px;
}
.filter label { width: 26px; }
.filter input {
  width: 139px;
  height: 20px;
  border: 1px solid #abd0ef;
  border-top-color: #68a9dc;
  border-radius: 1px;
  background: #fff;
  font: inherit;
}
.tree { list-style: none; font-family: "Liberation Sans", sans-serif; font-size: 11px; }
.node { display: flex; align-items: center; height: 16px; }
.node span { line-height: 16px; padding: 0 3px; }
.node .selected { background: #f0f0f0; }
.twig { width: 15px; }
.root, .leaf { gap: 2px; }
.root { padding-left: 4px; }
.model { padding-left: 8px; }
.leaf { gap: 1px; padding-left: 27px; }

.browser-tabs {
  display: flex;
  align-items: flex-start;
  height: 23px;
  font-family: "Liberation Mono", monospace;
  font-size: 10px;
}
.browser-tabs button {
  display: flex;
  align-items: center;
  gap: 5px;
  height: 20px;
  padding: 0 4px;
  border: 1px solid #8d8d92;
  border-top: 0;
  background: linear-gradient(#f4f4f4, #d4d4d4);
}
.browser-tabs .active {
  height: 22px;
  padding: 0 8px;
  border-left: 0;
  border-bottom: 0;
  background: #fff;
}

/* Document */
.document {
  flex: 1;
  min-width: 0;
  display: flex;
  flex-direction: column;
  padding: 2px 6px 0;
}
.doc-strip { display: flex; justify-content: space-between; height: 17px; }
.doc-tab { display: flex; height: 18px; padding-left: 2px; }
.doc-tab .slope { width: 22px; height: 18px; }
.doc-tab span {
  padding: 0 9px 0 2px;
  line-height: 16px;
  font-weight: bold;
  border-top: 1px solid #b9cdec;
  border-right: 1px solid #b9cdec;
  border-radius: 0 3px 0 0;
  background: linear-gradient(#fbfdff, #dce8f9);
}
.doc-actions { display: flex; align-items: center; gap: 4px; padding-right: 5px; }
.doc-actions svg { width: 12px; height: 12px; }
.frame {
  flex: 1;
  min-height: 0;
  display: flex;
  padding: 2px;
  border: 1px solid #bdd0ee;
  border-radius: 5px;
  background: #d8e4f7;
}
.frame-inner {
  flex: 1;
  min-width: 0;
  display: grid;
  grid-template: minmax(0, 1fr) 17px / minmax(0, 1fr) 17px;
  border: 2px solid #bdd0ee;
  border-radius: 2px;
}
.canvas { position: relative; overflow: hidden; background: #fff; }

.scroll { display: flex; justify-content: space-between; align-items: flex-start; background: #eee; }
.scroll button { display: grid; place-items: center; width: 16px; height: 16px; }
.scroll svg { width: 8px; height: 8px; }
.vertical { flex-direction: column; }
.horizontal { border-top: 1px solid #e2e2e2; }
.thumb { border: 1px solid #979797; border-radius: 1px; }
.vertical .thumb { width: 15px; height: 16px; background: linear-gradient(90deg, #fafafa 40%, #cfcfd2); }
.horizontal .thumb {
  display: flex;
  align-items: center;
  justify-content: center;
  gap: 1px;
  width: 66px;
  height: 15px;
  background: linear-gradient(#f6f6f6 45%, #c6c6c8);
}
.thumb i { width: 2px; height: 7px; background: #777; }
.corner { background: #f0f0f0; }

/* Diagram */
.note {
  position: absolute;
  left: 83px;
  top: 22px;
  color: #f23030;
  font-family: "Noto Sans CJK SC", sans-serif;
  font-size: 16px;
  font-weight: 300;
  line-height: 24px;
  white-space: nowrap;
}
.note span { font-family: "Liberation Mono", monospace; font-size: 13px; }
.page-line { position: absolute; top: 0; bottom: 0; width: 1px; background: #000; }
.line-a { left: 312px; }
.line-b { left: 997px; }

.entity {
  position: absolute;
  border: 1px solid #0d7fc0;
  background: linear-gradient(135deg, #fff, #cfe3fd 50%, #b0d5fc);
  color: #000;
  font-family: "DejaVu Sans Mono", "Liberation Mono", monospace;
  font-size: 8px;
  line-height: 11px;
}
.entity h3 {
  height: 15px;
  border-bottom: 1px solid #0d7fc0;
  font-size: 8px;
  line-height: 14px;
  text-align: center;
}
.entity table { margin: 2px 0 1px 4px; border-collapse: collapse; table-layout: fixed; width: 160px; }
.entity td { height: 11px; padding: 0; white-space: nowrap; }
.entity td:nth-child(1) { width: var(--name); }
.entity td:nth-child(2) { width: 68px; }
.entity table { width: calc(var(--name) + 94px); }

.row-1 { top: 76px; }
.row-2 { top: 283px; }
.row-3 { top: 533px; }
.c1 { --name: 73px; left: 205px; width: 178px; }
.c2 { --name: 103px; left: 415px; width: 203px; }
.c3 { --name: 107px; left: 651px; width: 208px; }
.c4 { --name: 113px; left: 891px; width: 214px; }
.c5 { --name: 68px; left: 205px; width: 173px; }
.c6 { --name: 78px; left: 410px; width: 182px; }
.c7 { --name: 67px; left: 625px; width: 167px; }
.c8 { --name: 68px; left: 824px; width: 167px; }
.c9 { --name: 63px; left: 205px; width: 162px; }

/* Right dock edge */
.toolbox {
  flex: none;
  width: 6px;
  overflow: hidden;
  border-left: 1px solid #a3a3a6;
  border-bottom: 1px solid #a3a3a6;
}
.toolbox h2 { height: 20px; font-size: 10px; line-height: 18px; background: linear-gradient(#bfcfe8, #e4ebf6); }
.slot { height: 24px; margin-left: 2px; background: #e6e8ec; }
.slot.pressed { border-left: 1px solid #5c84b4; background: #a9c2e2; }
.dock { flex: none; height: 5px; border-top: 1px solid #a6a6a6; background: #bccfe8; }
```
